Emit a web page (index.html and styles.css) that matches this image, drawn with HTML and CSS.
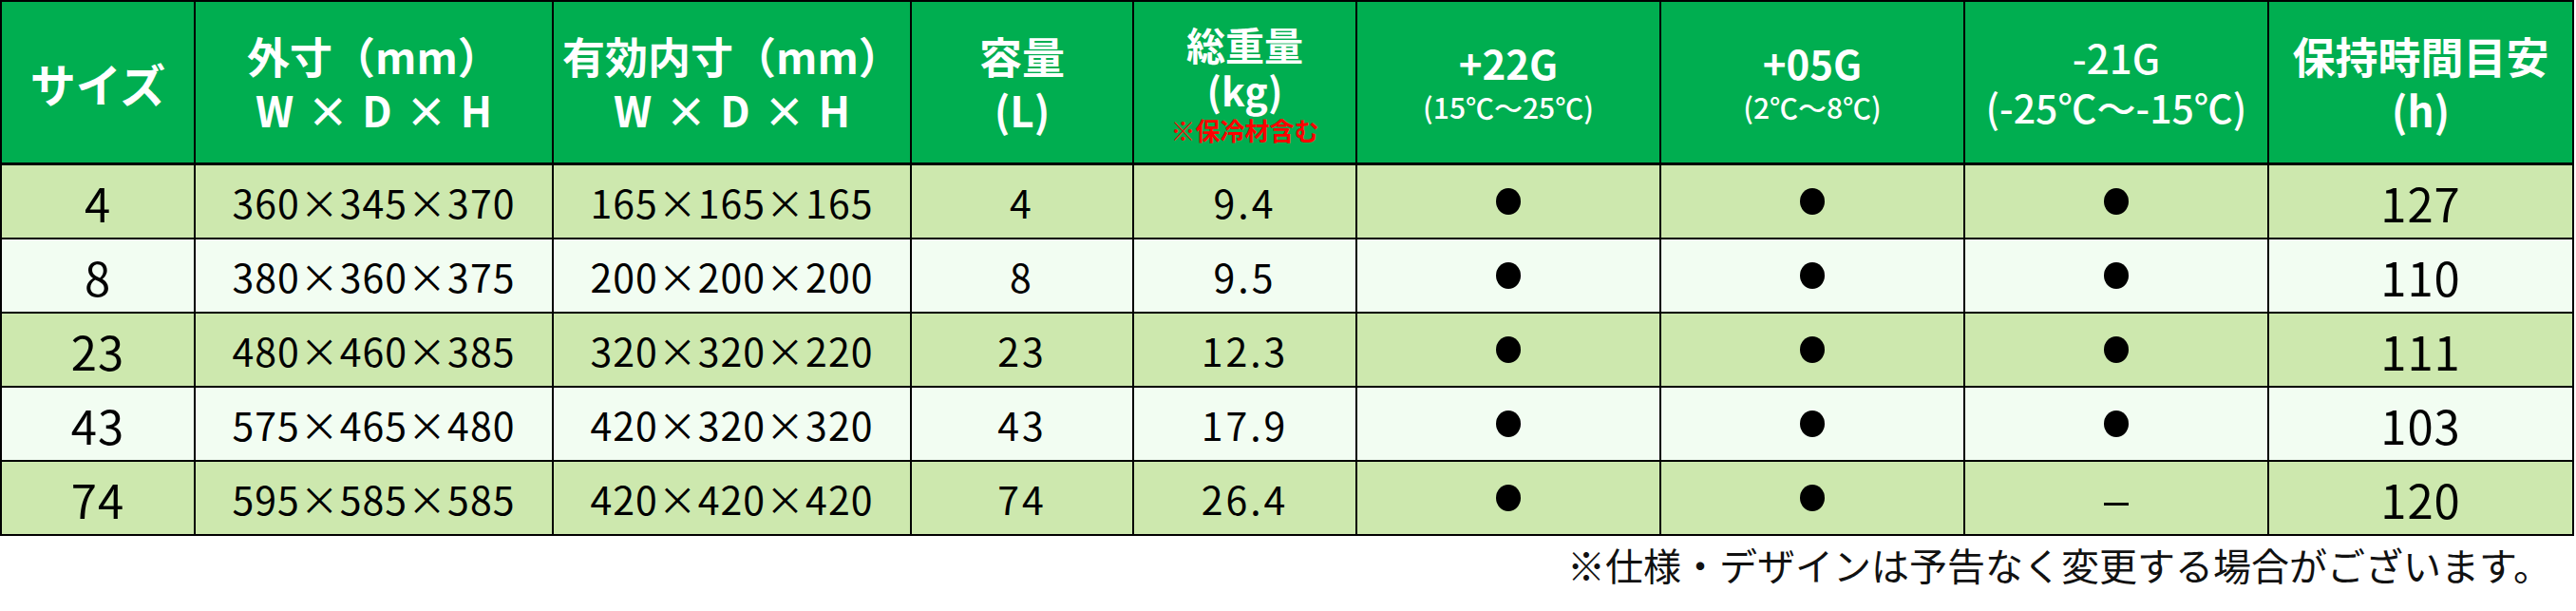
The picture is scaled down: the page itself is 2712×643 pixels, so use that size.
FILE: index.html
```html
<!DOCTYPE html>
<html lang="ja">
<head>
<meta charset="utf-8">
<title>サイズ表</title>
<link rel="stylesheet" href="styles.css">
</head>
<body>
<div class="page">
  <table class="spec">
    <colgroup>
      <col class="c-size">
      <col class="c-outer">
      <col class="c-inner">
      <col class="c-cap">
      <col class="c-weight">
      <col class="c-temp">
      <col class="c-temp">
      <col class="c-temp">
      <col class="c-hold">
    </colgroup>
    <thead>
      <tr>
        <th><span class="h1 big">サイズ</span></th>
        <th><span class="h1">外寸（mm）</span><span class="h2 wdh">W × D × H</span></th>
        <th><span class="h1">有効内寸（mm）</span><span class="h2 wdh">W × D × H</span></th>
        <th><span class="h1">容量</span><span class="h2">(L)</span></th>
        <th class="th-weight"><span class="h1 mid">総重量</span><span class="h2 mid">(kg)</span><span class="note-red">※保冷材含む</span></th>
        <th><span class="h1 g">+22G</span><span class="sub">(15℃～25℃)</span></th>
        <th><span class="h1 g">+05G</span><span class="sub">(2℃～8℃)</span></th>
        <th><span class="h1 g light">-21G</span><span class="sub large">(-25℃～-15℃)</span></th>
        <th><span class="h1">保持時間目安</span><span class="h2">(h)</span></th>
      </tr>
    </thead>
    <tbody>
      <tr class="odd">
        <td class="num-l">4</td><td class="dim">360×345×370</td><td class="dim">165×165×165</td><td class="num-m">4</td><td class="num-m">9.4</td>
        <td><span class="dot"></span></td><td><span class="dot"></span></td><td><span class="dot"></span></td><td class="num-l">127</td>
      </tr>
      <tr class="even">
        <td class="num-l">8</td><td class="dim">380×360×375</td><td class="dim">200×200×200</td><td class="num-m">8</td><td class="num-m">9.5</td>
        <td><span class="dot"></span></td><td><span class="dot"></span></td><td><span class="dot"></span></td><td class="num-l">110</td>
      </tr>
      <tr class="odd">
        <td class="num-l">23</td><td class="dim">480×460×385</td><td class="dim">320×320×220</td><td class="num-m">23</td><td class="num-m">12.3</td>
        <td><span class="dot"></span></td><td><span class="dot"></span></td><td><span class="dot"></span></td><td class="num-l">111</td>
      </tr>
      <tr class="even">
        <td class="num-l">43</td><td class="dim">575×465×480</td><td class="dim">420×320×320</td><td class="num-m">43</td><td class="num-m">17.9</td>
        <td><span class="dot"></span></td><td><span class="dot"></span></td><td><span class="dot"></span></td><td class="num-l">103</td>
      </tr>
      <tr class="odd">
        <td class="num-l">74</td><td class="dim">595×585×585</td><td class="dim">420×420×420</td><td class="num-m">74</td><td class="num-m">26.4</td>
        <td><span class="dot"></span></td><td><span class="dot"></span></td><td class="num-m"><span class="dash"></span></td><td class="num-l">120</td>
      </tr>
    </tbody>
  </table>
  <p class="footnote">※仕様・デザインは予告なく変更する場合がございます。</p>
</div>
</body>
</html>
```
FILE: styles.css
```css
html, body {
  margin: 0;
  padding: 0;
  background: #ffffff;
}

body {
  font-family: "Noto Sans CJK JP", "Noto Sans", sans-serif;
  color: #000000;
}

.page {
  width: 2712px;
}

.spec {
  border-collapse: collapse;
  table-layout: fixed;
  width: 2710px;
  margin: 0;
}

.c-size { width: 204px; }
.c-outer { width: 377px; }
.c-inner { width: 377px; }
.c-cap { width: 234px; }
.c-weight { width: 235px; }
.c-temp { width: 320px; }
.c-hold { width: 321px; }

.spec th,
.spec td {
  border: 2px solid #000000;
  padding: 0;
  text-align: center;
  vertical-align: middle;
}

.spec thead th {
  background: #00ae50;
  color: #ffffff;
  height: 165px;
  font-weight: 700;
  border-bottom-width: 3px;
}

.h1, .h2, .sub, .note-red {
  display: block;
  white-space: nowrap;
}

.h1 {
  font-size: 45px;
  line-height: 56px;
}

.h1.big {
  font-size: 48px;
}

.h2 {
  font-size: 44px;
  line-height: 56px;
}

.h2.wdh {
  word-spacing: 4px;
}

.h1.mid, .h2.mid {
  font-size: 41px;
  line-height: 48px;
}

.th-weight {
  padding-top: 4px !important;
}

.note-red {
  color: #ff0000;
  font-size: 26px;
  line-height: 38px;
  font-weight: 700;
}

.h1.g {
  font-size: 42px;
  line-height: 50px;
}

.h1.light {
  font-weight: 500;
}

.sub {
  font-size: 30px;
  line-height: 42px;
  font-weight: 500;
}

.sub.large {
  font-size: 41px;
  line-height: 54px;
}

.spec tbody td {
  height: 76px;
  line-height: 1;
}

.spec tbody tr.odd td {
  background: #cde8ae;
}

.spec tbody tr.even td {
  background: #f2fdf2;
}

.num-l {
  font-size: 49px;
  letter-spacing: 1px;
}

.num-m {
  font-size: 41px;
  letter-spacing: 3px;
}

.dim {
  font-size: 41px;
  letter-spacing: 1px;
}

.dot {
  display: inline-block;
  width: 26px;
  height: 28px;
  border-radius: 50%;
  background: #000000;
  vertical-align: middle;
}

.dash {
  display: inline-block;
  width: 26px;
  height: 3px;
  background: #000000;
  vertical-align: middle;
}

.footnote {
  margin: 0;
  padding: 2px 26px 0 0;
  text-align: right;
  font-size: 40px;
  line-height: 56px;
  color: #111111;
}
```
